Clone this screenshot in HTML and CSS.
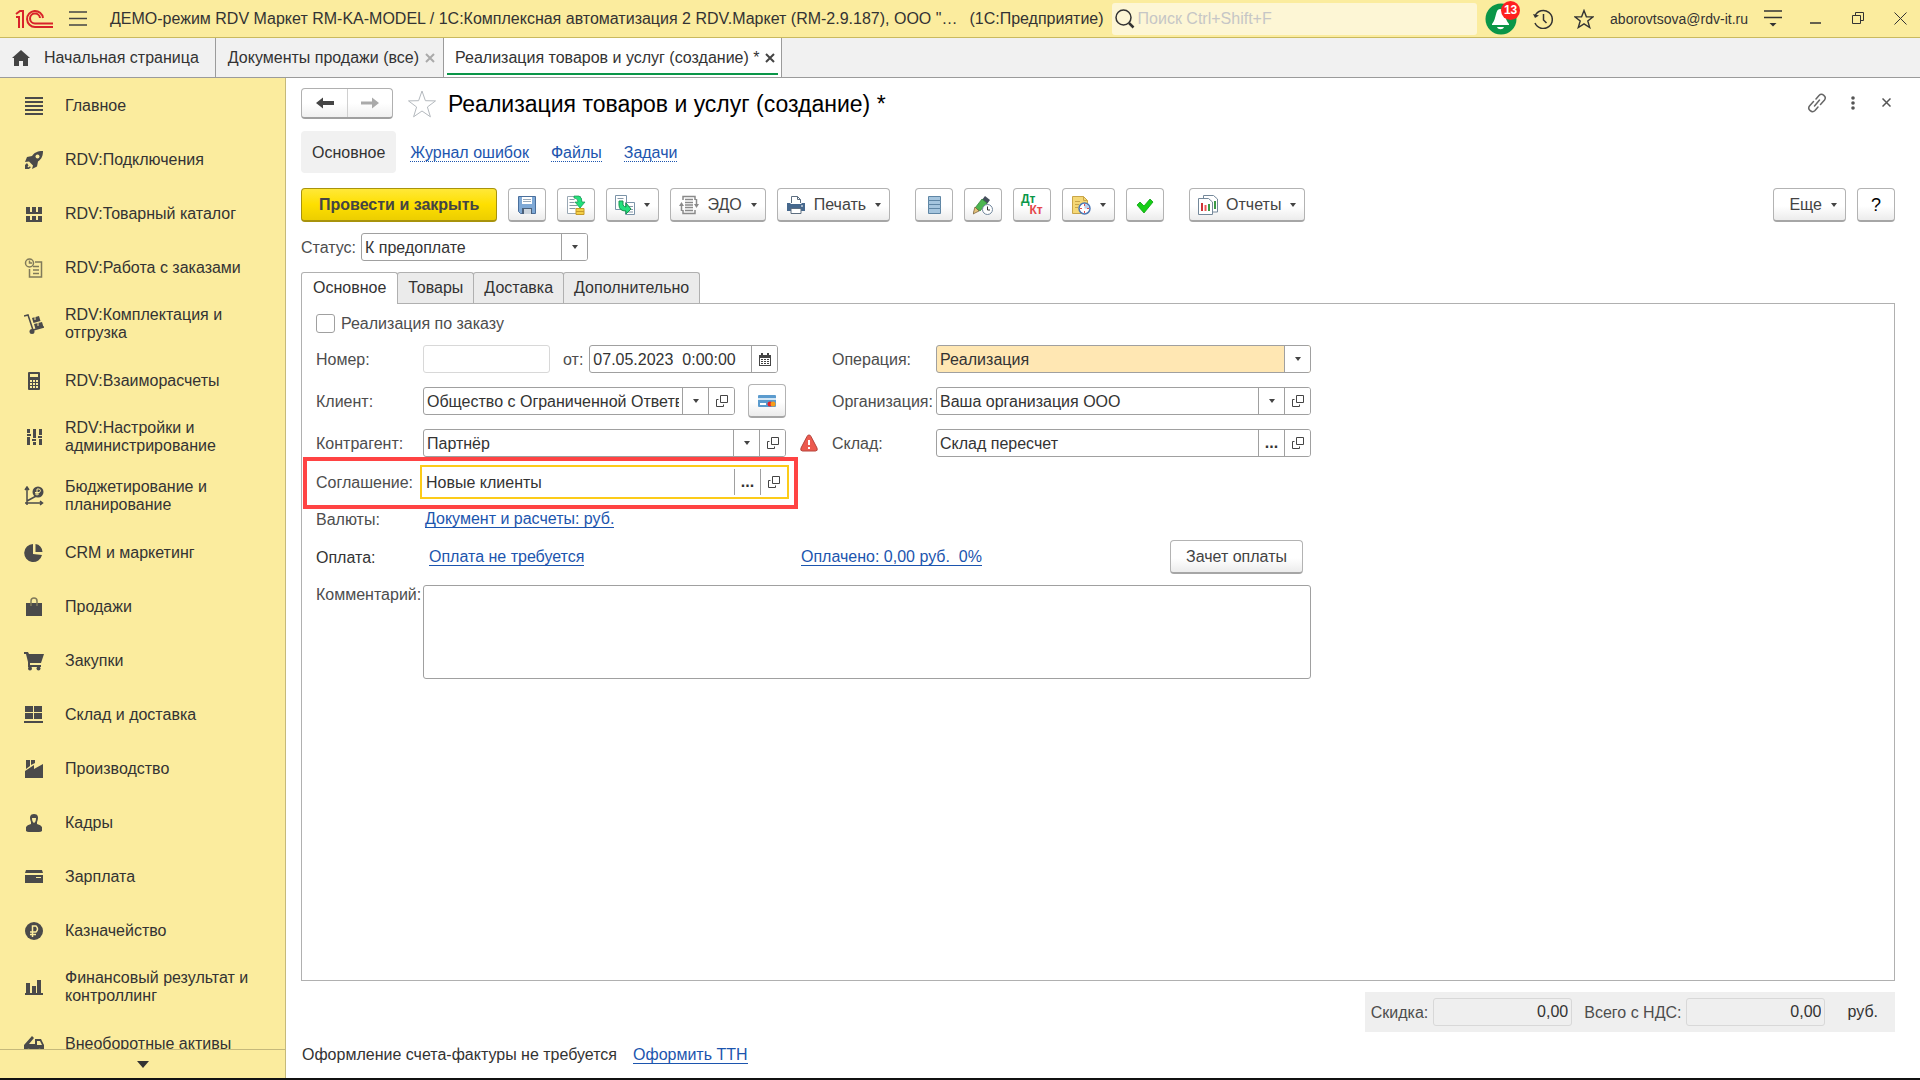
FILE: index.html
```html
<!DOCTYPE html>
<html lang="ru">
<head>
    <meta charset="UTF-8">
    <meta name="viewport" content="width=device-width, initial-scale=1.0">
    <title>Реализация товаров и услуг (создание)</title>
    <link rel="stylesheet" href="styles.css">
</head>
<body>
    <svg class="sprite" aria-hidden="true">
        <symbol id="i-open" viewBox="0 0 12 12"><path d="M4.5 .5h7v7h-7zM2.5 4.5h-2v7h7v-2" fill="none" stroke="#444"/></symbol>
        <symbol id="i-close" viewBox="0 0 10 10"><path d="M1 1l8 8M9 1l-8 8" fill="none" stroke="currentColor" stroke-width="2"/></symbol>
        <symbol id="i-star" viewBox="0 0 30 30"><path d="M15 2l3.4 9.7 10.1.2-8.1 6.1 3 9.8L15 22l-8.4 5.8 3-9.8-8.1-6.1 10.1-.2z" fill="none" stroke="currentColor"/></symbol>
    </svg>

    <header class="topbar">
        <svg class="logo" width="38" height="20" viewBox="0 0 38 20">
            <g fill="none" stroke="#d8222a" stroke-width="2">
                <path d="M1 5l4-3h3v17M1 8h3v11"/>
                <path d="M28 9A8 8 0 1 0 20 18h18M25 9a5 5 0 1 0-5 5.500h18"/>
            </g>
        </svg>
        <button class="icon-btn menu-btn" aria-label="Меню">
            <svg width="18" height="15" viewBox="0 0 18 15"><path d="M0 1h18M0 7.500h18M0 14h18" stroke="#444" stroke-width="1.500"/></svg>
        </button>
        <span class="app-title">ДЕМО-режим RDV Маркет RM-KA-MODEL / 1С:Комплексная автоматизация 2 RDV.Маркет (RM-2.9.187), ООО "…</span>
        <span class="app-name">(1С:Предприятие)</span>
        <label class="search">
            <svg width="20" height="20" viewBox="0 0 20 20"><circle cx="8.500" cy="8.500" r="7.500" fill="none" stroke="#333" stroke-width="1.500"/><path d="M14 14l4.500 4.500" stroke="#333" stroke-width="2.500"/></svg>
            <input type="text" placeholder="Поиск Ctrl+Shift+F">
        </label>
        <button class="icon-btn bell" aria-label="Уведомления">
            <svg width="32" height="32" viewBox="0 0 32 32"><circle cx="16" cy="16" r="15.500" fill="#0a9648"/><path d="M15 6c5 0 4 9 9 15v1H7v-1c5-6 3-15 8-15zM12 24h7c-1 3-6 3-7 0z" fill="#fff"/></svg>
            <span class="badge">13</span>
        </button>
        <button class="icon-btn history" aria-label="История">
            <svg width="20" height="20" viewBox="0 0 20 20"><path d="M2 7a9 9 0 1 1 0 7" fill="none" stroke="#333" stroke-width="1.500"/><path d="M0 5l2 4 4-2.500z" fill="#333"/><path d="M10.500 5v6l3 3" fill="none" stroke="#333" stroke-width="1.500"/></svg>
        </button>
        <button class="icon-btn favorites" aria-label="Избранное">
            <svg width="20" height="20" viewBox="0 0 20 20"><path d="M10 1.500l2.400 6.200 6.600.2-5.200 4.100 1.900 6.500L10 14.800l-5.700 3.700L6.200 12 1 7.900l6.600-.2z" fill="none" stroke="#333" stroke-width="1.400"/></svg>
        </button>
        <a class="user" href="#">aborovtsova@rdv-it.ru</a>
        <button class="icon-btn service" aria-label="Сервис">
            <svg width="18" height="17" viewBox="0 0 18 17"><path d="M0 1h18M0 7.500h18" stroke="#333" stroke-width="1.500"/><path d="M5.500 13h7L9 16.500z" fill="#333"/></svg>
        </button>
        <div class="window-btns">
            <button class="icon-btn" aria-label="Свернуть"><svg width="12" height="12" viewBox="0 0 12 12"><path d="M0 11h11" stroke="#333" stroke-width="1.500"/></svg></button>
            <button class="icon-btn" aria-label="Развернуть"><svg width="12" height="12" viewBox="0 0 12 12"><path d="M.5 3.500h8v8h-8zM3.500 3V.5h8v8H9" fill="none" stroke="#333"/></svg></button>
            <button class="icon-btn" aria-label="Закрыть"><svg width="13" height="13" viewBox="0 0 13 13"><path d="M.5.5l12 12M12.500.5l-12 12" stroke="#333"/></svg></button>
        </div>
    </header>

    <nav class="window-tabs">
        <a class="window-tab home" href="#">
            <svg width="18" height="16" viewBox="0 0 18 16"><path d="M9 0l9 8h-2v8h-5v-5H7v5H2V8H0z" fill="#444"/></svg>
            Начальная страница
        </a>
        <div class="window-tab">
            <a href="#">Документы продажи (все)</a>
            <button class="icon-btn tab-close" aria-label="Закрыть"><svg width="10" height="10"><use href="#i-close"/></svg></button>
        </div>
        <div class="window-tab active">
            <a href="#">Реализация товаров и услуг (создание) *</a>
            <button class="icon-btn tab-close" aria-label="Закрыть"><svg width="10" height="10"><use href="#i-close"/></svg></button>
        </div>
    </nav>

    <div class="workspace">
        <aside class="sidebar">
            <nav class="sections">
                <a href="#"><svg viewBox="0 0 20 20"><path d="M1 2h18M1 6h18M1 10h18M1 14h18M1 18h18" stroke="#4a4a4a" stroke-width="2"/></svg><span>Главное</span></a>
                <a href="#"><svg viewBox="0 0 20 20"><path d="M19 1c-6 0-9 2-11 5L3 7 1 12l4-.5 4 4L8 19l5-2.500 1-5C18 9 19 5 19 1zM3 13l-2 2v4h4l2-2-1.500-.5-1 1-1-1 1-1z"/><circle cx="13.500" cy="6.500" r="2" class="cut"/></svg><span>RDV:Подключения</span></a>
                <a href="#"><svg viewBox="0 0 20 20"><path d="M2 3h4v6H2zM8 3h4v6H8zM14 3h4v6h-4zM2 12h4v6H2zM8 12h4v6H8zM14 12h4v6h-4zM2 8h16v2H2zM2 16h16v2H2z"/></svg><span>RDV:Товарный каталог</span></a>
                <a href="#"><svg viewBox="0 0 20 20"><g fill="none" stroke="#807a5a" stroke-width="1.500"><circle cx="5.500" cy="5" r="4"/><path d="M5.500 2.500V5H8M11 4h6.500v15h-12v-8M9 8.500h6M9 12h6M9 15.500h6"/></g></svg><span>RDV:Работа с заказами</span></a>
                <a href="#"><svg viewBox="0 0 20 20"><path d="M0 2l4-1 5 15 11-3" fill="none" stroke="#4a4a4a" stroke-width="1.500"/><path d="M8 4l7-2 1.500 5-7 2zM10 10l8-2 1.500 5-8 2z"/><circle cx="8" cy="17.500" r="2.500"/><path d="M11 3v3M14 9v3" stroke="#fbec9e"/></svg><span>RDV:Комплектация и отгрузка</span></a>
                <a href="#"><svg viewBox="0 0 20 20"><rect x="4" y="1" width="12" height="18" rx="1"/><path class="cut" d="M6 3h8v3H6zM6 9h2v2H6zM9 9h2v2H9zM12 9h2v2h-2zM6 12h2v2H6zM9 12h2v2H9zM12 12h2v2h-2zM6 15h2v2H6zM9 15h2v2H9zM12 15h2v2h-2z"/></svg><span>RDV:Взаиморасчеты</span></a>
                <a href="#"><svg viewBox="0 0 20 20"><path d="M3 2h3v4H3zM3 7h4v2H3zM3 10h3v8H3zM9 2h3v9H9zM8 12h4v2H8zM9 15h3v3H9zM15 2h3v6h-3zM14 9h4v2h-4zM15 12h3v6h-3z"/></svg><span>RDV:Настройки и администрирование</span></a>
                <a href="#"><svg viewBox="0 0 20 20"><path d="M3 19V2M1 4l2-3 2 3M1 17h17M16 15l2.500 2-2.500 2M3 15l11-6" fill="none" stroke="#4a4a4a" stroke-width="1.500"/><circle cx="14" cy="6" r="5.500"/><path d="M13 9.500V3h2.500q2 1.500 0 3.500H11M11 8h4" fill="none" stroke="#fbec9e"/></svg><span>Бюджетирование и планирование</span></a>
                <a href="#"><svg viewBox="0 0 20 20"><path d="M9 1v10l9 1A9 9 0 1 1 9 1zM11.500 1A8 8 0 0 1 18.500 9h-7z"/></svg><span>CRM и маркетинг</span></a>
                <a href="#"><svg viewBox="0 0 20 20"><path d="M2 6h16v13H2z"/><path d="M7 9V4a3 3 0 0 1 6 0v5" fill="none" stroke="#807a5a" stroke-width="1.500"/></svg><span>Продажи</span></a>
                <a href="#"><svg viewBox="0 0 20 20"><path d="M0 1h4l1 2h15l-3 9H6v2h11v2H4V11L2 3H0z"/><circle cx="6" cy="17.500" r="2"/><circle cx="14.500" cy="17.500" r="2"/></svg><span>Закупки</span></a>
                <a href="#"><svg viewBox="0 0 20 20"><path d="M1 1h8v6H1zM10 1h8v6h-8zM1 8h8v6H1zM10 8h8v6h-8zM0 16h19v2H0z"/></svg><span>Склад и доставка</span></a>
                <a href="#"><svg viewBox="0 0 20 20"><path d="M1 19v-7l9-6v4l9-5v14zM2 1h4v6l-4 3zM7 1h4v3L7 6z"/></svg><span>Производство</span></a>
                <a href="#"><svg viewBox="0 0 20 20"><path d="M2 18v-4q1-2 5-3V9C5 4 6 1 10 1s5 3 3 8v2q4 1 5 3v4q-1 1-3 1H5q-2 0-3-1z"/><path class="cut" d="M8 5h4q0 4-2 5-2-1-2-5z"/></svg><span>Кадры</span></a>
                <a href="#"><svg viewBox="0 0 20 20"><path d="M2 3h16l1 3H1zM1 8h18v8H1z"/><path class="cut" d="M12 10h5v1h-5z"/></svg><span>Зарплата</span></a>
                <a href="#"><svg viewBox="0 0 20 20"><circle cx="10" cy="10" r="9"/><path d="M8.500 16V5H12q3 3 0 6H6M6 13.500h6" fill="none" stroke="#fbec9e" stroke-width="1.500"/></svg><span>Казначейство</span></a>
                <a href="#"><svg viewBox="0 0 20 20"><path d="M2 6h4v11H2zM8 9h4v8H8zM13 3h4v14h-4zM1 16h18v2H1z"/></svg><span>Финансовый результат и контроллинг</span></a>
                <a href="#"><svg viewBox="0 0 20 20"><path d="M0 11L8 2l2 2-5 6h6V5h6l3 6v5h-2a3 3 0 0 0-5 0H7a3 3 0 0 0-5 0H0z"/><path class="cut" d="M13 7h3l2 4h-5z"/><circle cx="4.500" cy="17" r="2"/><circle cx="15.500" cy="17" r="2"/></svg><span>Внеоборотные активы</span></a>
            </nav>
            <button class="scroll-down" aria-label="Вниз"><span class="big-caret"></span></button>
        </aside>

        <main class="content">
            <div class="title-row">
                <div class="nav-btns">
                    <button aria-label="Назад"><svg width="18" height="14" viewBox="0 0 18 14"><path d="M0 7l7-5.500v3.500h11v4H7v3.500z" fill="#444"/></svg></button>
                    <button aria-label="Вперед"><svg width="18" height="14" viewBox="0 0 18 14"><path d="M18 7l-7-5.500v4H0v3h11v4z" fill="#aaa"/></svg></button>
                </div>
                <button class="icon-btn star" aria-label="В избранное"><svg width="30" height="30"><use href="#i-star"/></svg></button>
                <h1>Реализация товаров и услуг (создание) *</h1>
                <div class="form-tools">
                    <button class="icon-btn" aria-label="Ссылка"><svg width="20" height="20" viewBox="0 0 20 20"><g fill="none" stroke="#666" stroke-width="1.500" stroke-linecap="round"><path d="M9 6l3-3.500c3-3 8 1 5.500 4.500l-4 4.500M11 14l-3 3.500c-3 3-8-1-5.500-4.500l4-4.500M7.500 13l5-6"/></g></svg></button>
                    <button class="icon-btn" aria-label="Ещё"><svg width="4" height="14" viewBox="0 0 4 14"><g fill="#555"><circle cx="2" cy="2" r="1.800"/><circle cx="2" cy="7" r="1.800"/><circle cx="2" cy="12" r="1.800"/></g></svg></button>
                    <button class="icon-btn" aria-label="Закрыть"><svg width="9" height="9" viewBox="0 0 9 9"><path d="M.5.5l8 8M8.500.5l-8 8" stroke="#555" stroke-width="1.500"/></svg></button>
                </div>
            </div>

            <nav class="form-nav">
                <span class="current">Основное</span>
                <a href="#">Журнал ошибок</a>
                <a href="#">Файлы</a>
                <a href="#">Задачи</a>
            </nav>

            <div class="toolbar">
                <button class="btn primary">Провести и закрыть</button>
                <button class="btn square" aria-label="Записать"><svg width="20" height="20" viewBox="0 0 20 20"><path d="M1.500 1.500h17v17h-15l-2-2z" fill="#7fa9d6" stroke="#4a6f9c"/><path d="M5 2h10v7H5z" fill="#fff"/><path d="M6 4.500h8M6 6.500h8" stroke="#9ab"/><path d="M5 13h10v6H5z" fill="#4b6079"/><path d="M7 14h7v5H7z" fill="#cdd6df"/></svg></button>
                <button class="btn square" aria-label="Провести"><svg width="20" height="20" viewBox="0 0 20 20"><path d="M1.500 1.500h13v17h-13z" fill="#fff" stroke="#9aa8b4"/><path d="M3.500 4.500h5M3.500 7.500h5M3.500 10.500h8M3.500 13.500h6" stroke="#8899a8"/><path d="M8 1h5q3 1 3 6h3l-5 6-5-6h3q0-4-4-4z" fill="#22e07c" stroke="#17934f" stroke-width=".7"/><path d="M10 13.500h8v6h-8z" fill="#f3cf48" stroke="#c79a26"/><path d="M10 16.500h8" stroke="#c79a26"/></svg></button>
                <button class="btn with-caret" aria-label="Создать на основании"><svg width="20" height="20" viewBox="0 0 20 20"><path d="M.5.5h11v14H.5zM10.500 7.500h9v12h-9z" fill="#fff" stroke="#7b93a8"/><path d="M2.500 3.500h6M13 11.500h5M13 14.500h5M13 17h5" stroke="#8899a8"/><path d="M4 6h4v4q1 2 3 2V8l5 6-5 5v-3q-7 0-7-6z" fill="#22e07c" stroke="#17934f"/></svg><span class="caret"></span></button>
                <button class="btn with-caret"><svg width="20" height="20" viewBox="0 0 20 20"><g fill="none" stroke="#8a8a8a" stroke-width="1.500"><path d="M4 5V1.500h12V5M4 15v3.500h12V15M6 4.500h8M6 7.500h8M6 10h8M6 12.500h8M6 15.500h8M2.500 10v6M17.500 4v6"/></g><path d="M0 11l2.500-4L5 11zM15 9h5l-2.500 4z" fill="#8a8a8a"/></svg>ЭДО<span class="caret"></span></button>
                <button class="btn with-caret print"><svg width="20" height="20" viewBox="0 0 20 20"><path d="M5.500 8V1.500h6l3 3V8" fill="#fff" stroke="#5d6e80"/><path d="M11.500 1.500v3h3" fill="none" stroke="#5d6e80"/><path d="M1 8h3l1 1h10l1-1h3v8H1z" fill="#46688d"/><path d="M5 13.500h10v5H5z" fill="#fff" stroke="#5d6e80"/><path d="M15 11h2" stroke="#fff"/></svg>Печать<span class="caret"></span></button>
                <button class="btn square apart" aria-label="Реестр"><svg width="20" height="20" viewBox="0 0 20 20"><path d="M4.500 1.500h12v4h-12zM4.500 5.500h12v4h-12zM4.500 9.500h12v4h-12zM4.500 13.500h12v5h-12z" fill="#a5c5de" stroke="#5f86a5"/></svg></button>
                <button class="btn square" aria-label="Отложить"><svg width="20" height="20" viewBox="0 0 20 20"><path d="M12 1l5 4-3 4-5-4z" fill="#444e5c"/><path d="M9 4l5 4-7 8-5-3z" fill="#4db54f" stroke="#2c7a35" stroke-width=".7"/><path d="M2 12l4 4-6 3z" fill="#e6c37b" stroke="#6b5430" stroke-width=".7"/><circle cx="14.500" cy="14.500" r="5" fill="#fff" stroke="#71869b"/><path d="M14.500 11.500v3.500H17" fill="none" stroke="#333"/></svg></button>
                <button class="btn square dtkt" aria-label="Проводки"><span class="dt">Дт</span><span class="kt">Кт</span></button>
                <button class="btn with-caret" aria-label="Напоминание"><svg width="20" height="20" viewBox="0 0 20 20"><path d="M1.500 1.500h11l4 4v13h-15z" fill="#f5d876" stroke="#c9a548"/><path d="M4 6.500h5M4 9.500h4M4 12.500h3M12.500 1.500v4h4" fill="none" stroke="#c9a548"/><circle cx="13.500" cy="13.500" r="5.500" fill="#fff" stroke="#4d78b5" stroke-width="1.500"/><path d="M13.500 13.500V9a4.500 4.500 0 0 1 4.500 4.500z" fill="#b8ccea"/><path d="M13.500 9v2M13.500 16v2M9 13.500h2M16 13.500h2" stroke="#e24b4b"/></svg><span class="caret"></span></button>
                <button class="btn square" aria-label="Готово"><svg width="20" height="20" viewBox="0 0 20 20"><path d="M2 10l3-3 4 4 6-7 3 3-9 11z" fill="#16cf16" stroke="#0d9c12" stroke-width=".8"/></svg></button>
                <button class="btn with-caret apart reports"><svg width="20" height="20" viewBox="0 0 20 20"><path d="M5.500.5h10l4 3.500v13h-14z" fill="#fff" stroke="#74889a"/><path d="M.5 3.500h10l4 3.500v12.500H.5z" fill="#fff" stroke="#74889a"/><path d="M4 8v8" stroke="#c33" stroke-width="2"/><path d="M7.500 10v6" stroke="#e55" stroke-width="2"/><path d="M11 9v7M17 6v8" stroke="#3b9a46" stroke-width="2"/></svg>Отчеты<span class="caret"></span></button>
                <button class="btn with-caret more">Еще<span class="caret"></span></button>
                <button class="btn square help">?</button>
            </div>

            <div class="status-row">
                <label for="status">Статус:</label>
                <div class="field status">
                    <select id="status"><option>К предоплате</option></select>
                    <span class="field-btn"><span class="caret"></span></span>
                </div>
            </div>

            <div class="page-tabs" role="tablist">
                <button class="page-tab selected" role="tab">Основное</button>
                <button class="page-tab" role="tab">Товары</button>
                <button class="page-tab" role="tab">Доставка</button>
                <button class="page-tab" role="tab">Дополнительно</button>
            </div>

            <section class="panel">
                <label class="check-row"><input type="checkbox"> Реализация по заказу</label>

                <form class="form-grid">
                    <label for="number">Номер:</label>
                    <div class="cell">
                        <input class="number" type="text" id="number" readonly>
                        <label class="from" for="date">от:</label>
                        <div class="field date">
                            <input type="text" id="date" value="07.05.2023  0:00:00">
                            <button type="button" class="field-btn" aria-label="Календарь"><svg width="12" height="13" viewBox="0 0 12 13"><path d="M0 2h12v11H0z" fill="#444"/><path d="M3 0v3M9 0v3" stroke="#444" stroke-width="2"/><path d="M1 5h10v7H1z" fill="#fff"/><path d="M2 6.500h8M2 8.500h8M2 10.500h8" stroke="#444" stroke-dasharray="2 1"/></svg></button>
                        </div>
                    </div>
                    <span></span>
                    <label for="operation">Операция:</label>
                    <div class="field required">
                        <select id="operation"><option>Реализация</option></select>
                        <span class="field-btn"><span class="caret"></span></span>
                    </div>

                    <label for="client">Клиент:</label>
                    <div class="cell client">
                        <div class="field">
                            <input type="text" id="client" value="Общество с Ограниченной Ответвенностью">
                            <button type="button" class="field-btn" aria-label="Выбрать"><span class="caret"></span></button>
                            <button type="button" class="field-btn" aria-label="Открыть"><svg width="12" height="12"><use href="#i-open"/></svg></button>
                        </div>
                        <button type="button" class="btn square" aria-label="Карта лояльности"><svg width="18" height="12" viewBox="0 0 18 12"><rect width="18" height="12" rx="1" fill="#5b9bce"/><path d="M0 3h18v2H0z" fill="#d5e7f5"/><path d="M2 9h6" stroke="#fff" stroke-width="2"/><circle cx="12" cy="9" r="2.500" fill="#e3232c"/><circle cx="15" cy="9" r="2.500" fill="#f59c1a"/></svg></button>
                    </div>
                    <span></span>
                    <label for="org">Организация:</label>
                    <div class="field">
                        <input type="text" id="org" value="Ваша организация ООО">
                        <button type="button" class="field-btn" aria-label="Выбрать"><span class="caret"></span></button>
                        <button type="button" class="field-btn" aria-label="Открыть"><svg width="12" height="12"><use href="#i-open"/></svg></button>
                    </div>

                    <label for="partner">Контрагент:</label>
                    <div class="field">
                        <input type="text" id="partner" value="Партнёр">
                        <button type="button" class="field-btn" aria-label="Выбрать"><span class="caret"></span></button>
                        <button type="button" class="field-btn" aria-label="Открыть"><svg width="12" height="12"><use href="#i-open"/></svg></button>
                    </div>
                    <span class="warning"><svg width="18" height="18" viewBox="0 0 18 18"><path d="M9 1q1.500 0 2 1.500L17 14q1 3-1.500 3h-13Q0 17 1 14L7 2.500Q7.500 1 9 1z" fill="#ec5a4e" stroke="#b5453d"/><path d="M9 6v5M9 13v2" stroke="#fff" stroke-width="2"/></svg></span>
                    <label for="stock">Склад:</label>
                    <div class="field">
                        <input type="text" id="stock" value="Склад пересчет">
                        <button type="button" class="field-btn" aria-label="Выбрать"><span class="dots">...</span></button>
                        <button type="button" class="field-btn" aria-label="Открыть"><svg width="12" height="12"><use href="#i-open"/></svg></button>
                    </div>

                    <div class="agreement">
                        <label for="agreement">Соглашение:</label>
                        <div class="field focused">
                            <input type="text" id="agreement" value="Новые клиенты">
                            <button type="button" class="field-btn" aria-label="Выбрать"><span class="dots">...</span></button>
                            <button type="button" class="field-btn" aria-label="Открыть"><svg width="12" height="12"><use href="#i-open"/></svg></button>
                        </div>
                    </div>

                    <span class="caption">Валюты:</span>
                    <div class="cell currency"><a href="#">Документ и расчеты: руб.</a></div>

                    <span class="caption dark">Оплата:</span>
                    <div class="cell payment"><a href="#">Оплата не требуется</a></div>
                    <div class="paid">
                        <a href="#">Оплачено: 0,00 руб.&nbsp; 0%</a>
                        <button type="button" class="btn">Зачет оплаты</button>
                    </div>

                    <label class="comment-label" for="comment">Комментарий:</label>
                    <textarea id="comment"></textarea>
                </form>
            </section>

            <div class="totals">
                <label for="discount">Скидка:</label>
                <input type="text" id="discount" value="0,00" readonly>
                <label for="total">Всего с НДС:</label>
                <input type="text" id="total" value="0,00" readonly>
                <span class="unit">руб.</span>
            </div>

            <div class="invoice-row">
                <span>Оформление счета-фактуры не требуется</span>
                <a href="#">Оформить ТТН</a>
            </div>
        </main>
    </div>
</body>
</html>
```
FILE: styles.css
```css
*, *::after {
    box-sizing: border-box;
}
body {
    margin: 0;
    height: 100vh;
    display: flex;
    flex-direction: column;
    overflow: hidden;
    font-family: "Liberation Sans", Arial, sans-serif;
    font-size: 16px;
    line-height: 18px;
    color: #333;
    background: #fff;
    border-bottom: 2px solid #111;
}
button, input, select, textarea {
    font: inherit;
    color: inherit;
    margin: 0;
}
button {
    cursor: pointer;
}
a {
    color: #1c55ae;
}
svg {
    display: block;
    flex: none;
}
.sprite {
    position: absolute;
    width: 0;
    height: 0;
}
.icon-btn {
    display: flex;
    flex: none;
    padding: 0;
    border: none;
    background: none;
}

/* Верхняя панель */
.topbar {
    display: flex;
    align-items: center;
    flex: none;
    height: 38px;
    padding: 0 13px 0 15px;
    background: #fbec9e;
    border-bottom: 1px solid #c9b95f;
}
.menu-btn {
    margin: 0 23px 0 16px;
}
.app-title {
    white-space: nowrap;
}
.app-name {
    margin-left: 12px;
    white-space: nowrap;
}
.search {
    display: flex;
    align-items: center;
    flex: 1;
    height: 32px;
    margin-left: 8px;
    padding-left: 3px;
    border-radius: 3px;
    background: #fdf6d5;
}
.search input {
    flex: 1;
    min-width: 0;
    padding: 0 3px;
    border: none;
    outline: none;
    background: none;
}
.search input::placeholder {
    color: #c6c6c6;
}
.bell {
    position: relative;
    margin-left: 8px;
}
.badge {
    position: absolute;
    top: -2px;
    right: -3px;
    width: 19px;
    height: 19px;
    border-radius: 50%;
    background: #ff2020;
    color: #fff;
    font-size: 12px;
    font-weight: bold;
    line-height: 19px;
    text-align: center;
}
.history {
    margin-left: 16px;
}
.favorites {
    margin-left: 21px;
}
.user {
    margin-left: 16px;
    color: #333;
    font-size: 14px;
    text-decoration: none;
}
.service {
    margin-left: 16px;
}
.window-btns {
    display: flex;
    gap: 30px;
    margin-left: 28px;
}

/* Вкладки окон */
.window-tabs {
    display: flex;
    flex: none;
    height: 40px;
    background: #f1f1f1;
    border-bottom: 1px solid #9b9b9b;
}
.window-tab {
    display: flex;
    align-items: center;
    gap: 6px;
    padding: 0 8px 0 12px;
    border-right: 1px solid #9b9b9b;
    color: #333;
    text-decoration: none;
    white-space: nowrap;
}
.window-tab a {
    color: #333;
    text-decoration: none;
}
.window-tab.home {
    gap: 14px;
    padding-right: 16px;
}
.window-tab.active {
    position: relative;
    padding: 0 6px 0 11px;
    background: #fff;
}
.window-tab.active::after {
    content: "";
    position: absolute;
    left: 3px;
    right: 3px;
    bottom: 2px;
    height: 2px;
    background: #0a9648;
}
.tab-close {
    color: #aaa;
}
.active .tab-close {
    color: #444;
}

.workspace {
    display: flex;
    flex: 1;
    min-height: 0;
}

/* Разделы */
.sidebar {
    display: flex;
    flex-direction: column;
    flex: none;
    width: 286px;
    background: #fbec9e;
    border-right: 1px solid #c5b97b;
}
.sections {
    flex: 1;
    min-height: 0;
    overflow: hidden;
}
.sections a {
    display: flex;
    align-items: center;
    gap: 21px;
    min-height: 54px;
    padding: 12px 30px 11px 24px;
    color: #333;
    text-decoration: none;
}
.sections svg {
    width: 20px;
    height: 20px;
    fill: #4a4a4a;
}
.sections .cut {
    fill: #fbec9e;
}
.scroll-down {
    display: flex;
    align-items: center;
    justify-content: center;
    flex: none;
    height: 29px;
    padding: 0;
    border: none;
    border-top: 1px solid #c5b97b;
    background: none;
}
.big-caret {
    border: 6px solid transparent;
    border-top: 7px solid #333;
    border-bottom: none;
}

/* Форма документа */
.content {
    display: flex;
    flex-direction: column;
    flex: 1;
    min-width: 0;
    padding: 10px 25px 14px 15px;
}
.title-row {
    display: flex;
    align-items: center;
    height: 31px;
}
.nav-btns {
    display: flex;
    height: 31px;
    border: 1px solid #b0b0b0;
    border-bottom: 2px solid #a0a0a0;
    border-radius: 4px;
    background: linear-gradient(#fff 50%, #f0f0f0);
}
.nav-btns button {
    display: flex;
    align-items: center;
    justify-content: center;
    width: 45px;
    padding: 0;
    border: none;
    background: none;
}
.nav-btns button + button {
    border-left: 1px solid #d0d0d0;
}
.star {
    margin: 0 11px 0 14px;
    color: #b4b9be;
}
h1 {
    margin: 0;
    color: #000;
    font-size: 23px;
    font-weight: normal;
    line-height: 26px;
}
.form-tools {
    display: flex;
    align-items: center;
    gap: 24px;
    margin-left: auto;
    padding: 0 4px 2px 0;
}
.form-tools button:last-child {
    margin-left: 3px;
}
.form-nav {
    display: flex;
    align-items: center;
    gap: 22px;
    margin-top: 12px;
}
.form-nav .current {
    margin-right: -8px;
    padding: 13px 11px 11px;
    border-radius: 4px;
    background: #f1f1f1;
}
.form-nav a {
    padding-top: 1px;
    border-bottom: 1px dotted #1c55ae;
    line-height: 17px;
    text-decoration: none;
}
.toolbar {
    display: flex;
    gap: 11px;
    margin-top: 15px;
}
.btn {
    display: flex;
    align-items: center;
    justify-content: center;
    height: 34px;
    padding: 0 17px;
    border: 1px solid #b3b3b3;
    border-bottom: 2px solid #a6a6a6;
    border-radius: 4px;
    background: linear-gradient(#fff 55%, #ececec);
    color: #444;
    white-space: nowrap;
}
.btn.primary {
    border-color: #a8930c;
    background: linear-gradient(#ffe838, #fedf00 50%, #ecce00);
    font-weight: bold;
}
.btn.square {
    width: 38px;
    padding: 0;
}
.btn.with-caret {
    gap: 8px;
    padding: 0 8px;
}
.caret {
    border: 3px solid transparent;
    border-top: 4px solid #444;
    border-bottom: none;
}
.btn .caret {
    margin-left: 1px;
}
.btn.apart {
    margin-left: 14px;
}
.btn.more {
    margin-left: auto;
    padding-left: 15px;
}
.btn.help {
    color: #000;
    font-size: 18px;
}
.btn.dtkt {
    flex-direction: column;
    font-size: 12px;
    font-weight: bold;
    line-height: 11px;
}
.dt {
    margin-right: 8px;
    color: #0a9648;
}
.kt {
    margin-left: 8px;
    color: #e5484b;
}
.paid .btn {
    padding: 0 15px;
}

/* Поля ввода */
.field {
    display: flex;
    min-width: 0;
    height: 28px;
    border: 1px solid #a0a0a0;
    border-radius: 3px;
    background: #fff;
}
.field input, .field select {
    flex: 1;
    min-width: 0;
    padding: 1px 3px 0;
    border: none;
    outline: none;
    appearance: none;
    background: none;
}
.field-btn {
    display: flex;
    align-items: center;
    justify-content: center;
    flex: none;
    width: 26px;
    padding: 0;
    border: none;
    border-left: 1px solid #a0a0a0;
    background: #fff;
}
.field-btn:last-child {
    border-radius: 0 2px 2px 0;
}
.field.required {
    background: #ffe7b3;
}
.dots {
    font-weight: bold;
}
label, .caption {
    padding-top: 1px;
    color: #4d4d4d;
}
.status-row {
    display: flex;
    align-items: center;
    gap: 5px;
    margin-top: 11px;
}
.field.status {
    width: 227px;
}

.page-tabs {
    display: flex;
    margin-top: 11px;
}
.page-tab {
    height: 31px;
    margin-right: -1px;
    padding: 0 10px;
    border: 1px solid #b0b0b0;
    border-bottom: none;
    border-radius: 3px 3px 0 0;
    background: #ebebeb;
}
.page-tab.selected {
    position: relative;
    z-index: 1;
    margin-bottom: -1px;
    height: 32px;
    padding: 0 11px 1px;
    background: #fff;
}
.panel {
    flex: 1;
    padding: 5px 14px;
    border: 1px solid #b0b0b0;
}
.check-row {
    display: flex;
    align-items: center;
    gap: 6px;
    height: 29px;
    padding: 0;
}
.check-row input {
    appearance: none;
    width: 19px;
    height: 19px;
    border: 1px solid #a0a0a0;
    border-radius: 3px;
}
.form-grid {
    display: grid;
    grid-template-columns: 107px 363px 46px 104px 375px;
    grid-template-rows: 42px 42px 42px 36px 38px 38px;
    align-items: center;
}
.cell {
    display: flex;
    align-items: center;
}
.number {
    width: 127px;
    height: 28px;
    border: 1px solid #d8d8d8;
    border-radius: 3px;
}
.from {
    margin: 0 6px 0 13px;
}
.field.date {
    flex: 1;
    margin-right: 8px;
}
.cell.client {
    gap: 13px;
}
.client .field {
    width: 313px;
}
.warning {
    padding-left: 14px;
}
.agreement {
    position: relative;
    display: grid;
    grid-template-columns: 107px 363px;
    grid-column: 1 / -1;
    align-items: center;
}
/* Рамка-выноска вокруг поля */
.agreement::after {
    content: "";
    position: absolute;
    top: -8px;
    left: -13px;
    width: 495px;
    height: 52px;
    border: 4px solid #ff4343;
    pointer-events: none;
}
.field.focused {
    height: 34px;
    margin: 0 -3px;
    padding: 2px 1px;
    border: 2px solid #fccb19;
    border-radius: 0;
}
.currency {
    grid-column: 2 / -1;
    padding-left: 2px;
}
.payment {
    padding-left: 6px;
}
.caption.dark {
    color: #333;
}
.currency a, .payment a, .paid a, .invoice-row a {
    border-bottom: 1px solid #1c55ae;
    line-height: 17px;
    text-decoration: none;
}
.paid {
    display: flex;
    align-items: center;
    justify-content: space-between;
    grid-column: 3 / -1;
    padding: 0 8px 0 15px;
}
.comment-label {
    align-self: start;
    margin-top: 9px;
}
#comment {
    grid-column: 2 / -1;
    height: 94px;
    margin-top: 9px;
    padding: 4px;
    border: 1px solid #a0a0a0;
    border-radius: 3px;
    resize: none;
}

/* Итоги */
.totals {
    display: flex;
    align-items: center;
    align-self: flex-end;
    height: 40px;
    margin-top: 11px;
    padding: 0 17px 0 6px;
    background: #efefef;
}
.totals input {
    width: 139px;
    height: 28px;
    margin: 0 12px 0 5px;
    padding: 0 3px;
    border: 1px solid #d8d8d8;
    border-radius: 3px;
    background: none;
    text-align: right;
}
.unit {
    margin-left: 10px;
}
.invoice-row {
    display: flex;
    gap: 16px;
    margin-top: 14px;
    padding-left: 1px;
}
```
